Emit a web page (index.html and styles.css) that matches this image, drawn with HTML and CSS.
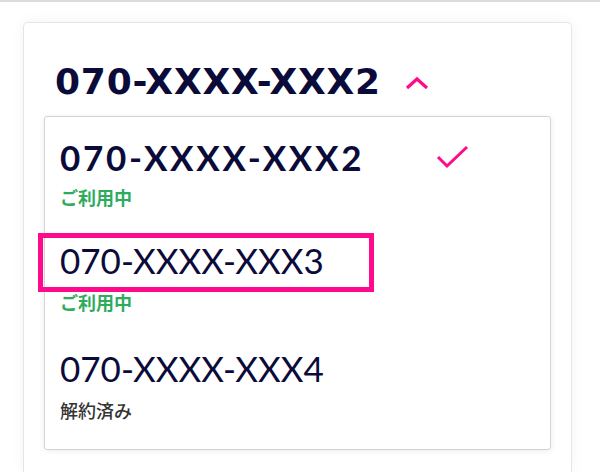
FILE: index.html
```html
<!DOCTYPE html>
<html lang="ja">
<head>
  <meta charset="UTF-8">
  <title>回線選択</title>
  <link rel="stylesheet" href="styles.css">
</head>
<body>
  <div class="topbar"></div>
  <div class="card">
    <div class="select-head">
      <span class="current">070-XXXX-XXX2</span>
      <svg class="chevron" width="24" height="14" viewBox="0 0 24 14">
        <path d="M2 12 L12 3 L22 12" fill="none" stroke="#ff0a8c" stroke-width="3.2"/>
      </svg>
    </div>
    <ul class="options">
      <li class="option selected">
        <div class="row">
          <span class="number">070-XXXX-XXX2</span>
          <svg class="check" width="34" height="24" viewBox="0 0 34 24">
            <path d="M2 12 L11 21 L31 2" fill="none" stroke="#ff0a8c" stroke-width="3"/>
          </svg>
        </div>
        <span class="status active">ご利用中</span>
      </li>
      <li class="option">
        <span class="number focus">070-XXXX-XXX3</span>
        <span class="status active">ご利用中</span>
      </li>
      <li class="option last">
        <span class="number">070-XXXX-XXX4</span>
        <span class="status ended">解約済み</span>
      </li>
    </ul>
  </div>
</body>
</html>
```

FILE: styles.css
```css
html, body { height: 100%; overflow: hidden; }
body { margin: 0; background: #fff; font-family: Lato, "Noto Sans CJK JP", sans-serif; color: #0b0b3a; }
.topbar { height: 2px; background: #dcdce0; }
.card { box-sizing: border-box; margin: 20px 28px 0 23px; height: 450px; border: 1px solid #e4e4ec; border-bottom: 0; border-radius: 5px 5px 0 0; box-shadow: 0 0 14px rgba(0,0,0,0.05); padding: 0 20px; }
.select-head { display: flex; align-items: center; gap: 24px; padding: 38px 0 14px 11px; }
.current { font-family: "DejaVu Sans", sans-serif; font-size: 36px; font-weight: 700; letter-spacing: 0.8px; }
.chevron { margin-top: 2px; }
.options { list-style: none; margin: 0; padding: 10px 0 6px; border: 1px solid #d4d4d8; border-radius: 3px; box-shadow: 0 1px 6px rgba(0,0,0,0.08); }
.option { display: flex; flex-direction: column; padding: 8px 15px 21px; }
.option.last { padding-top: 11px; }
.row { display: flex; align-items: center; justify-content: space-between; width: 410px; }
.number { font-size: 35px; line-height: 44px; }
.selected .number { font-weight: 700; letter-spacing: 2.7px; }
.focus { align-self: flex-start; padding: 0 45px 5px 17px; margin: 0 -45px -5px -17px; outline: 5px solid #ff0a8c; }
.status { font-family: "Noto Sans CJK JP", sans-serif; font-size: 18px; font-weight: 700; line-height: 24px; margin-top: 8px; }
.selected .status { margin-top: 6px; }
.active { color: #2eab5c; }
.ended { color: #333; font-weight: 500; }
```
